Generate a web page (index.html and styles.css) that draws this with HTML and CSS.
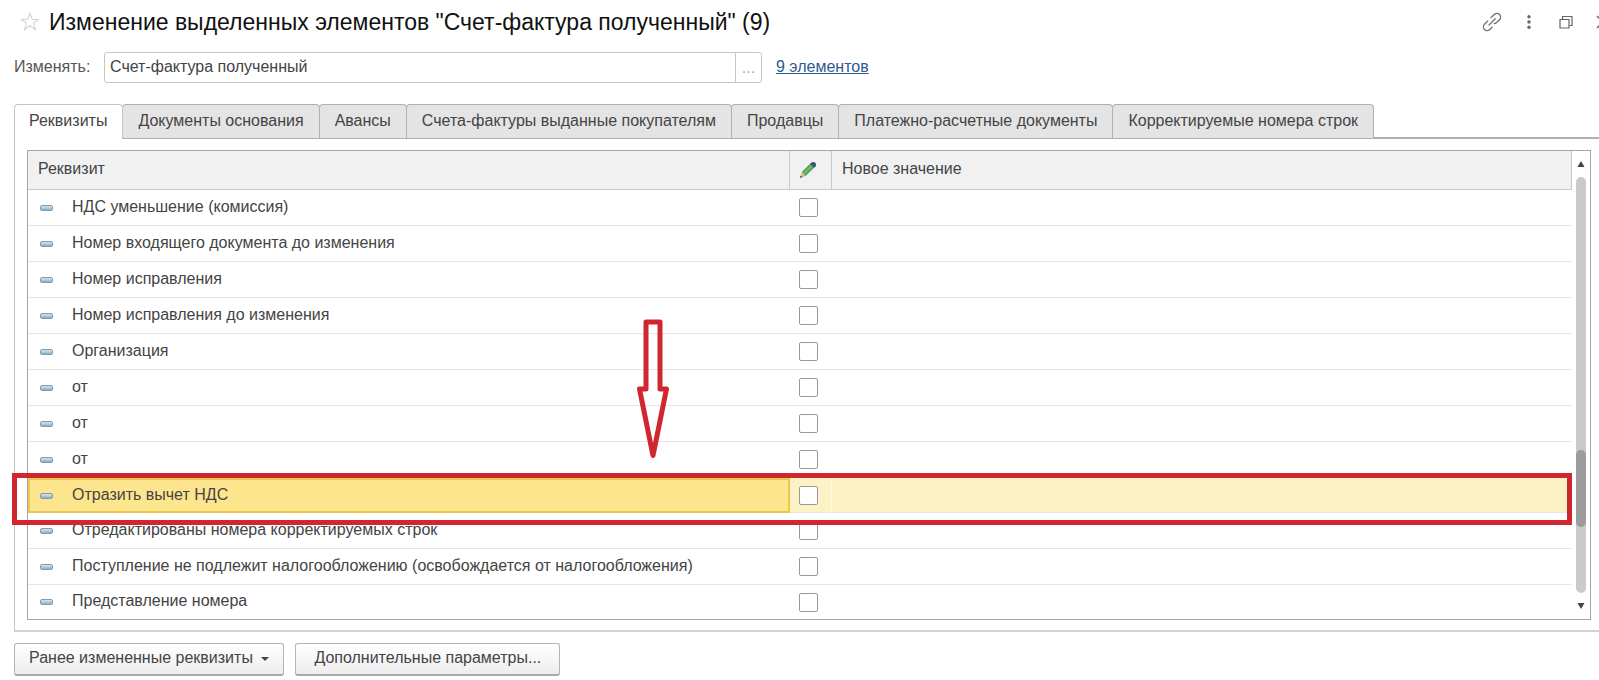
FILE: index.html
```html
<!DOCTYPE html>
<html lang="ru">
<head>
<meta charset="utf-8">
<meta name="viewport" content="width=device-width, initial-scale=1">
<title>Изменение выделенных элементов</title>
<link rel="stylesheet" href="styles.css">
</head>
<body>
<header class="titlebar">
  <button class="icon-button" type="button" aria-label="В избранное">
    <svg width="20" height="20" viewBox="0 0 20 20"><path d="M10 1.5l2.3 6h6.2l-5 3.8 1.9 6.4-5.4-3.9-5.4 3.9 1.9-6.4-5-3.8h6.2z" fill="none" stroke="#d4d4d8" stroke-width="1.1"/></svg>
  </button>
  <h1 class="title">Изменение выделенных элементов "Счет-фактура полученный" (9)</h1>
  <div class="window-tools">
    <button class="icon-button" type="button" aria-label="Получить ссылку">
      <svg width="20" height="20" viewBox="0 0 20 20" fill="none" stroke="#777" stroke-width="1.4" stroke-linecap="round"><path d="M9 5.600l3.200-3.100a3.700 3.700 0 0 1 5.300 5.300l-2.800 2.800a3.700 3.700 0 0 1-2.600 1M5.800 9l-3.300 3.200a3.700 3.700 0 0 0 5.300 5.300l2.200-2.200M7 13l6.200-6.200"/></svg>
    </button>
    <button class="icon-button" type="button" aria-label="Ещё">
      <svg width="20" height="20" viewBox="0 0 20 20" fill="#666"><circle cx="10" cy="4.8" r="1.7"/><circle cx="10" cy="10" r="1.7"/><circle cx="10" cy="15.2" r="1.7"/></svg>
    </button>
    <button class="icon-button" type="button" aria-label="Развернуть">
      <svg width="20" height="20" viewBox="0 0 20 20" fill="none" stroke="#666" stroke-width="1.2"><path d="M4 7.500h9v8.500H4z"/><path d="M6.500 7V4.500h9.500v9H13.500"/></svg>
    </button>
    <button class="icon-button" type="button" aria-label="Закрыть">
      <svg width="20" height="20" viewBox="0 0 20 20" stroke="#666" stroke-width="1.5"><path d="M4 4l12 12M16 4L4 16"/></svg>
    </button>
  </div>
</header>

<div class="field-row">
  <label class="field-label" for="object">Изменять:</label>
  <div class="picker">
    <input class="picker-input" id="object" type="text" value="Счет-фактура полученный">
    <button class="picker-button" type="button" aria-label="Выбрать">...</button>
  </div>
  <a class="link" href="#items">9 элементов</a>
</div>

<div class="tabs" role="tablist">
  <button class="tab tab-active" type="button" role="tab" aria-selected="true">Реквизиты</button>
  <button class="tab" type="button" role="tab">Документы основания</button>
  <button class="tab" type="button" role="tab">Авансы</button>
  <button class="tab" type="button" role="tab">Счета-фактуры выданные покупателям</button>
  <button class="tab" type="button" role="tab">Продавцы</button>
  <button class="tab" type="button" role="tab">Платежно-расчетные документы</button>
  <button class="tab" type="button" role="tab">Корректируемые номера строк</button>
</div>

<main class="panel">
  <div class="grid" id="items">
    <table class="table">
      <colgroup><col class="col-name"><col class="col-check"><col></colgroup>
      <thead>
        <tr>
          <th>Реквизит</th>
          <th class="check-cell" aria-label="Изменить">
            <svg class="pencil" width="18" height="18" viewBox="0 0 18 18"><path d="M1 17l1.800-6 3.700 4z" fill="#e3b778"/><path d="M1 17l.8-2.600 1.700 1.700z" fill="#4a4238"/><path d="M2.800 11l8-8 4 4-8.300 8z" fill="#4ba552"/><path d="M4.100 12.300l8-8 1.300 1.300-8.200 8z" fill="#73c274"/><path d="M10.800 3l1.600-1.400q2.600-1.200 4.100.4 1.300 1.800.1 3.400L14.800 7z" fill="#37586b"/></svg>
          </th>
          <th>Новое значение</th>
        </tr>
      </thead>
      <tbody>
        <tr><td><span class="mark"></span><label for="r1">НДС уменьшение (комиссия)</label></td><td class="check-cell"><input class="check" id="r1" type="checkbox"></td><td></td></tr>
        <tr><td><span class="mark"></span><label for="r2">Номер входящего документа до изменения</label></td><td class="check-cell"><input class="check" id="r2" type="checkbox"></td><td></td></tr>
        <tr><td><span class="mark"></span><label for="r3">Номер исправления</label></td><td class="check-cell"><input class="check" id="r3" type="checkbox"></td><td></td></tr>
        <tr><td><span class="mark"></span><label for="r4">Номер исправления до изменения</label></td><td class="check-cell"><input class="check" id="r4" type="checkbox"></td><td></td></tr>
        <tr><td><span class="mark"></span><label for="r5">Организация</label></td><td class="check-cell"><input class="check" id="r5" type="checkbox"></td><td></td></tr>
        <tr><td><span class="mark"></span><label for="r6">от</label></td><td class="check-cell"><input class="check" id="r6" type="checkbox"></td><td></td></tr>
        <tr><td><span class="mark"></span><label for="r7">от</label></td><td class="check-cell"><input class="check" id="r7" type="checkbox"></td><td></td></tr>
        <tr><td><span class="mark"></span><label for="r8">от</label></td><td class="check-cell"><input class="check" id="r8" type="checkbox"></td><td></td></tr>
        <tr class="selected"><td><span class="mark"></span><label for="r9">Отразить вычет НДС</label></td><td class="check-cell"><input class="check" id="r9" type="checkbox"></td><td></td></tr>
        <tr><td><span class="mark"></span><label for="r10">Отредактированы номера корректируемых строк</label></td><td class="check-cell"><input class="check" id="r10" type="checkbox"></td><td></td></tr>
        <tr><td><span class="mark"></span><label for="r11">Поступление не подлежит налогообложению (освобождается от налогообложения)</label></td><td class="check-cell"><input class="check" id="r11" type="checkbox"></td><td></td></tr>
        <tr><td><span class="mark"></span><label for="r12">Представление номера</label></td><td class="check-cell"><input class="check" id="r12" type="checkbox"></td><td></td></tr>
      </tbody>
    </table>
    <div class="scrollbar">
      <button class="scroll-button" type="button" aria-label="Вверх"><svg width="8" height="6" viewBox="0 0 8 6"><path d="M4 0l3.500 6h-7z" fill="#444"/></svg></button>
      <div class="track"><div class="thumb"></div></div>
      <button class="scroll-button" type="button" aria-label="Вниз"><svg width="8" height="6" viewBox="0 0 8 6"><path d="M4 6L.5 0h7z" fill="#444"/></svg></button>
    </div>
    <div class="highlight"></div>
    <svg class="arrow" width="34" height="142" viewBox="0 0 34 142"><path d="M10 3h14v67h6.500L17 136.500 3.500 70H10z" fill="none" stroke="#d0262f" stroke-width="5" stroke-linejoin="round"/></svg>
  </div>
</main>

<footer class="actions">
  <button class="button" type="button">Ранее измененные реквизиты <span class="caret"></span></button>
  <button class="button" type="button">Дополнительные параметры...</button>
</footer>
</body>
</html>
```
FILE: styles.css
```css
* {
  box-sizing: border-box;
}

body {
  margin: 0;
  background: #fff;
  color: #444;
  font-family: "Liberation Sans", Arial, sans-serif;
  font-size: 16px;
  line-height: 20px;
  overflow-x: hidden;
}

button,
input {
  font: inherit;
  color: inherit;
}

.titlebar {
  display: flex;
  align-items: center;
  height: 44px;
  padding-left: 20px;
  overflow: hidden;
}

.icon-button {
  display: flex;
  flex: none;
  padding: 0;
  border: 0;
  background: none;
}

.title {
  flex: 1;
  margin: 0 0 0 9px;
  color: #111;
  font-size: 23px;
  font-weight: 400;
  line-height: 28px;
  white-space: nowrap;
}

.window-tools {
  display: flex;
  gap: 17px;
  margin-right: -14px;
}

.field-row {
  display: flex;
  align-items: center;
  margin-top: 8px;
  padding-left: 14px;
  height: 31px;
}

.field-label {
  width: 90px;
  padding-bottom: 2px;
  color: #555;
}

.picker {
  display: flex;
  width: 658px;
  height: 31px;
  border: 1px solid #c6c6c6;
  border-radius: 3px;
}

.picker-input {
  flex: 1;
  min-width: 0;
  padding: 0 5px 2px;
  border: 0;
  background: none;
}

.picker-button {
  width: 26px;
  padding: 0;
  border: 0;
  border-left: 1px solid #c6c6c6;
  background: none;
  color: #aaa;
}

.link {
  margin-left: 14px;
  padding-bottom: 2px;
  color: #2f5a92;
}

.tabs {
  display: flex;
  margin-top: 21px;
  margin-left: 14px;
  height: 35px;
  border-bottom: 2px solid #b0b0b0;
}

.tab {
  height: 34px;
  margin-right: -1px;
  padding: 0 15px 1px;
  border: 1px solid #b0b0b0;
  border-bottom-width: 0;
  border-radius: 4px 4px 0 0;
  background: #e4e4e4;
  white-space: nowrap;
}

.tab-active {
  z-index: 1;
  height: 35px;
  padding: 0 15px 2px 14px;
  background: #fff;
  border-color: #c4c4c4;
}

.panel {
  margin-left: 14px;
  padding: 11px 8px 10px 12px;
  border-left: 1px solid #c4c4c4;
  border-bottom: 2px solid #d2d2d2;
}

.grid {
  position: relative;
  display: flex;
  border: 1px solid #a6a6a6;
}

.table {
  flex: 1;
  min-width: 0;
  table-layout: fixed;
  border-collapse: separate;
  border-spacing: 0;
}

.col-name {
  width: 762px;
}

.col-check {
  width: 42px;
}

.table th {
  height: 39px;
  padding: 0 10px 2px;
  border-right: 1px solid #c9c9c9;
  border-bottom: 1px solid #c9c9c9;
  background: #f1f1f1;
  font-weight: 400;
  text-align: left;
}

.table td {
  height: 36px;
  padding: 0 12px 2px;
  border-bottom: 1px solid #e6e6e6;
  white-space: nowrap;
}

.table tr:last-child td {
  height: 34px;
  border-bottom: 0;
}

.table .check-cell {
  padding: 0 0 0 9px;
}

.pencil,
.check {
  display: block;
}

.mark {
  display: inline-block;
  width: 13px;
  height: 6px;
  margin-right: 19px;
  border: 1px solid #7f9cae;
  border-radius: 2px;
  background: linear-gradient(#d5e5ee, #8db0c6);
  vertical-align: 1px;
}

.check {
  width: 19px;
  height: 19px;
  margin: 0;
  border: 1px solid #999;
  border-radius: 2px;
  background: #fff;
  appearance: none;
}

.table .selected td {
  height: 35px;
  background: #fdf1c6;
}

.table .selected td:first-child {
  border: 2px solid #e6c84f;
  padding-left: 10px;
  background: #fde58e;
}

.selected .check-cell {
  border-right: 1px solid #fff8e0;
}

.scrollbar {
  display: flex;
  flex-direction: column;
  align-items: center;
  width: 18px;
}

.scroll-button {
  display: flex;
  align-items: center;
  justify-content: center;
  width: 18px;
  height: 26px;
  padding: 0;
  border: 0;
  background: none;
}

.track {
  display: flex;
  flex: 1;
  flex-direction: column;
  width: 10px;
  padding-top: 273px;
  border-radius: 5px;
  background: #cacaca;
}

.thumb {
  height: 77px;
  border-radius: 5px;
  background: #9c9c9c;
}

.highlight {
  position: absolute;
  top: 322px;
  right: 18px;
  left: -16px;
  height: 52px;
  border: 5px solid #d0262f;
}

.arrow {
  position: absolute;
  top: 168px;
  left: 608px;
}

.actions {
  display: flex;
  gap: 11px;
  padding: 11px 14px 6px;
}

.button {
  min-width: 265px;
  height: 33px;
  padding: 0 14px 2px;
  border: 1px solid #b4b4b4;
  border-bottom: 2px solid #a8a8a8;
  border-radius: 3px;
  background: linear-gradient(#fff, #ededed);
}

.caret {
  display: inline-block;
  margin-left: 4px;
  border: 4px solid transparent;
  border-top-color: #444;
  border-bottom: 0;
  vertical-align: 2px;
}
```
